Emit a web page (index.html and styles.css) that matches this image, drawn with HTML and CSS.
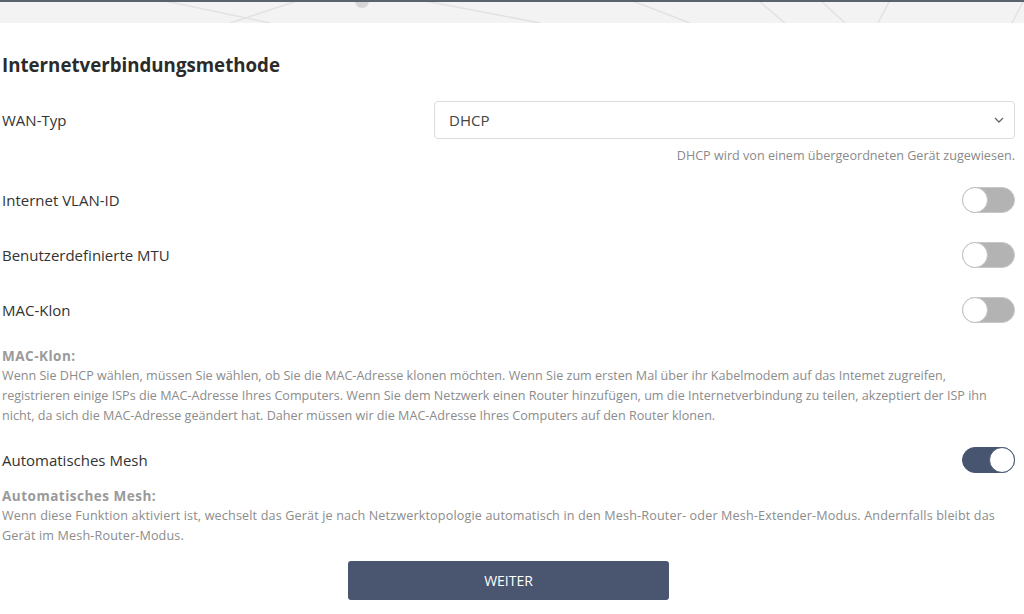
FILE: index.html
```html
<!DOCTYPE html>
<html lang="de">
<head>
    <meta charset="utf-8">
    <title>Internetverbindungsmethode</title>
    <link rel="stylesheet" href="styles.css">
</head>
<body>
<div class="top-strip">
    <svg class="strip-lines" width="1024" height="23" viewBox="0 0 1024 23">
        <line x1="160" y1="0" x2="270" y2="23" />
        <line x1="300" y1="0" x2="230" y2="23" />
        <line x1="420" y1="0" x2="540" y2="23" />
        <line x1="630" y1="0" x2="690" y2="23" />
        <line x1="760" y1="2" x2="785" y2="23" />
        <line x1="820" y1="0" x2="845" y2="23" />
        <line x1="890" y1="0" x2="878" y2="23" />
        <line x1="1024" y1="0" x2="1012" y2="23" />
        <circle cx="362" cy="1" r="7" class="dot" />
    </svg>
</div>

<div class="page">
    <h2 class="section-title">Internetverbindungsmethode</h2>

    <div class="row row-select">
        <div class="label">WAN-Typ</div>
        <div class="select">
            <span>DHCP</span>
            <svg class="chevron" width="10" height="6" viewBox="0 0 10 6">
                <path d="M1 1 L5 5 L9 1" />
            </svg>
        </div>
    </div>
    <div class="hint">DHCP wird von einem übergeordneten Gerät zugewiesen.</div>

    <div class="row">
        <div class="label">Internet VLAN-ID</div>
        <div class="switch"><span class="knob"></span></div>
    </div>
    <div class="row">
        <div class="label">Benutzerdefinierte MTU</div>
        <div class="switch"><span class="knob"></span></div>
    </div>
    <div class="row">
        <div class="label">MAC-Klon</div>
        <div class="switch"><span class="knob"></span></div>
    </div>

    <div class="note">
        <div class="note-title">MAC-Klon:</div>
        Wenn Sie DHCP wählen, müssen Sie wählen, ob Sie die MAC-Adresse klonen möchten. Wenn Sie zum ersten Mal über ihr Kabelmodem auf das Intemet zugreifen, registrieren einige ISPs die MAC-Adresse Ihres Computers. Wenn Sie dem Netzwerk einen Router hinzufügen, um die Internetverbindung zu teilen, akzeptiert der ISP ihn nicht, da sich die MAC-Adresse geändert hat. Daher müssen wir die MAC-Adresse Ihres Computers auf den Router klonen.
    </div>

    <div class="row">
        <div class="label">Automatisches Mesh</div>
        <div class="switch on"><span class="knob"></span></div>
    </div>

    <div class="note note-mesh">
        <div class="note-title">Automatisches Mesh:</div>
        Wenn diese Funktion aktiviert ist, wechselt das Gerät je nach Netzwerktopologie automatisch in den Mesh-Router- oder Mesh-Extender-Modus. Andernfalls bleibt das Gerät im Mesh-Router-Modus.
    </div>

    <div class="actions">
        <button class="btn-primary">WEITER</button>
    </div>
</div>
</body>
</html>
```

FILE: styles.css
```css
* {
    box-sizing: border-box;
}

body {
    margin: 0;
    padding: 0;
    background: #fff;
    font-family: "Open Sans", "Noto Sans", sans-serif;
    color: #333;
    overflow: hidden;
}

.top-strip {
    height: 23px;
    background: #f3f3f3;
    border-top: 2px solid #5a626d;
    overflow: hidden;
}

.strip-lines {
    display: block;
    margin-top: -2px;
}

.strip-lines line {
    stroke: #e2e2e2;
    stroke-width: 1.5;
}

.strip-lines .dot {
    fill: #d6d6d6;
}

.page {
    padding: 30px 9px 0 2px;
}

.section-title {
    margin: 0 0 24px;
    font-size: 18.7px;
    font-weight: 700;
    color: #2b2b2b;
    line-height: 24px;
}

.row {
    display: flex;
    align-items: center;
    justify-content: space-between;
    height: 26px;
    margin-bottom: 29px;
}

.row-select {
    height: 38px;
    margin-bottom: 8px;
}

.label {
    font-size: 15px;
    color: #333;
}

.select {
    width: 581px;
    height: 38px;
    border: 1px solid #dcdcdc;
    border-radius: 4px;
    display: flex;
    align-items: center;
    justify-content: space-between;
    padding: 0 10px 0 14px;
    font-size: 15px;
    color: #444;
}

.chevron path {
    fill: none;
    stroke: #666;
    stroke-width: 1.3;
}

.hint {
    text-align: right;
    font-size: 12.6px;
    line-height: 17px;
    color: #8a8a8a;
    margin-bottom: 23px;
}

.switch {
    position: relative;
    width: 53px;
    height: 26px;
    border-radius: 13px;
    background: #b3b3b3;
    border: 1px solid #c8c8c8;
}

.switch .knob {
    position: absolute;
    left: -1px;
    top: -1px;
    width: 26px;
    height: 26px;
    border-radius: 50%;
    background: #fff;
    border: 1px solid #c2c2c2;
}

.switch.on {
    background: #475570;
    border-color: #475570;
}

.switch.on .knob {
    left: auto;
    right: -1px;
    border-color: #475570;
}

.note {
    font-size: 12.6px;
    line-height: 20px;
    color: #8c8c8c;
    margin: -6px 0 21px;
}

.note-mesh {
    margin-top: -16px;
    letter-spacing: 0.15px;
}

.note-title {
    font-size: 13.5px;
    font-weight: 700;
    letter-spacing: 0.5px;
    color: #9a9a9a;
}

.actions {
    display: flex;
    justify-content: center;
    margin-top: -6px;
}

.btn-primary {
    width: 321px;
    height: 39px;
    border: none;
    border-radius: 3px;
    background: #4a5570;
    color: #fff;
    font-family: inherit;
    font-size: 14px;
}
```
